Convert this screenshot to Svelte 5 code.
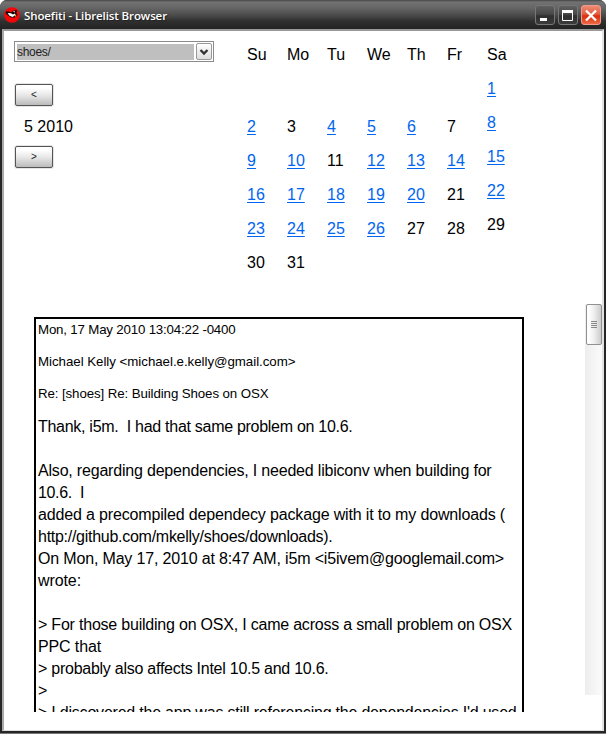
<script>
  const columns = [
    ['Su', '', '2', '9', '16', '23', '30'],
    ['Mo', '', '3', '10', '17', '24', '31'],
    ['Tu', '', '4', '11', '18', '25'],
    ['We', '', '5', '12', '19', '26'],
    ['Th', '', '6', '13', '20', '27'],
    ['Fr', '', '7', '14', '21', '28'],
    ['Sa', '1', '8', '15', '22', '29']
  ];
  const unlinked = ['3', '7', '11', '21', '27', '28', '29', '30', '31'];
  const isLink = (d) => /^\d+$/.test(d) && !unlinked.includes(d);

  const headers = [
    ['Mon, 17 May 2010 13:04:22 -0400', 197.5],
    ['Michael Kelly <michael.e.kelly@gmail.com>', 257.5],
    ['Re: [shoes] Re: Building Shoes on OSX', 230.5]
  ];
  const lines = [
    ['Thank, i5m.  I had that same problem on 10.6.', 314.5],
    ['', 0],
    ['Also, regarding dependencies, I needed libiconv when building for', 453.5],
    ['10.6.  I', 46],
    ['added a precompiled dependecy package with it to my downloads (', 467],
    ['http://github.com/mkelly/shoes/downloads).', 294.5],
    ['On Mon, May 17, 2010 at 8:47 AM, i5m <i5ivem@googlemail.com>', 466],
    ['wrote:', 43],
    ['', 0],
    ['> For those building on OSX, I came across a small problem on OSX', 474],
    ['PPC that', 63],
    ['> probably also affects Intel 10.5 and 10.6.', 290.5],
    ['>', 9],
    ["> I discovered the app was still referencing the dependencies I'd used", 478.5]
  ];

  // Spreads a line's characters so that it fills the given width.
  function fit(node, width) {
    const n = node.textContent.length;
    if (n < 2) return;
    const natural = node.getBoundingClientRect().width;
    node.style.letterSpacing = (width - natural) / n + 'px';
  }
</script>

<div class="window">
  <header>
    <svg class="logo" width="16" height="16" viewBox="0 0 16 16">
      <circle cx="8" cy="8" r="7.8" fill="#f40606" />
      <path d="M1.5 4.5 L5 4.5 L7 5.5 L10 3.5 L13 3 L12.5 6 L13.5 8 L11 10.5 L7 10.5 L4 8.5 L2 6.5 Z" fill="#150000" />
      <path d="M3.5 6 L7 6.2 L9 7.5 L11 6.5 L11.5 8 L8.5 10 L5.5 8.8 Z" fill="#fff" />
      <path d="M9 4.6 L11 4 L10.5 5.4 Z" fill="#fff" />
      <path d="M10 8.5 L12.5 7.5 L11.5 10 Z" fill="#e59a30" />
    </svg>
    <h1><span use:fit={143}>Shoefiti - Librelist Browser</span></h1>
    <div class="controls">
      <button aria-label="Minimize"><svg width="20" height="20"><rect x="5" y="13" width="7" height="3" fill="#fff" /></svg></button>
      <button aria-label="Maximize"><svg width="20" height="20"><path d="M4.5 6.5 V15.5 H14.5 V6" fill="none" stroke="#fff" /><rect x="4" y="5" width="11" height="3" fill="#fff" /></svg></button>
      <button class="close" aria-label="Close"><svg width="20" height="20"><path d="M5 5.5 L15 15.5 M15 5.5 L5 15.5" stroke="#fff" stroke-width="2.3" /></svg></button>
    </div>
  </header>
  <main>
    <section class="top">
      <div class="side">
        <div class="select">
          <div class="value"><span use:fit={33.5}>shoes/</span></div>
          <div class="drop"><svg width="16" height="18"><path d="M4.5 7 L8 10.5 L11.5 7" fill="none" stroke="#333" stroke-width="2.4" /></svg></div>
        </div>
        <button class="step">&lt;</button>
        <div class="month"><span use:fit={49}>5 2010</span></div>
        <button class="step">&gt;</button>
      </div>
      <div class="calendar">
        {#each columns as col, i}
          <div class="col" class:last={i === 6}>
            {#each col as d}
              <div class="cell">{#if isLink(d)}<a href="#day">{d}</a>{:else}{d}{/if}</div>
            {/each}
          </div>
        {/each}
      </div>
    </section>
    <section class="bottom">
      <article>
        {#each headers as [t, w]}
          <div class="meta"><span use:fit={w}>{t}</span></div>
        {/each}
        <div class="body">
          {#each lines as [t, w]}
            <div class="line"><span use:fit={w}>{t}</span></div>
          {/each}
        </div>
      </article>
      <div class="track"><div class="thumb"><i></i><i></i><i></i><i></i></div></div>
    </section>
  </main>
</div>

<style>
  .window {
    box-sizing: border-box;
    width: 606px;
    height: 734px;
    display: flex;
    flex-direction: column;
    padding: 0 2px 2px;
    background: #262626;
    border-bottom: 1px solid #777;
    border-radius: 7px 7px 0 0;
    font-family: "Liberation Sans", Arial, sans-serif;
    color: #000;
    overflow: hidden;
  }
  header {
    height: 29px;
    flex: none;
    box-sizing: border-box;
    margin: 0 -2px;
    padding: 0 5px 0 4px;
    display: flex;
    align-items: center;
    background: linear-gradient(#444 0, #727272 2px, #656565 8px, #4b4b4b 15px, #303030 21px, #242424 28px);
  }
  .logo { flex: none; }
  h1 {
    flex: 1;
    margin: 2px 0 0 4px;
    font: 600 11.5px/16px "Open Sans", "Noto Sans", sans-serif;
    color: #fff;
    white-space: nowrap;
    text-shadow: 1px 1px 1px #222;
  }
  .controls { display: flex; gap: 3px; margin-top: 1px; }
  .controls button {
    box-sizing: border-box;
    width: 20px;
    height: 20px;
    padding: 0;
    border: 1px solid #777;
    border-radius: 3px;
    background: linear-gradient(#606060, #484848 45%, #303030 55%, #3b3b3b);
  }
  .controls svg { display: block; margin: -1px; }
  .controls .close {
    border-color: #f19a88;
    background: linear-gradient(#ec8a76, #e25d40 45%, #d92e0c 55%, #ee6846);
  }
  main {
    flex: 1;
    min-height: 0;
    box-sizing: border-box;
    display: flex;
    flex-direction: column;
    border-top: 2px solid #999;
    border-left: 2px solid #aaa;
    border-right: 2px solid #e2e2e2;
    border-bottom: 1px solid #dcdfdf;
    background: #fff;
  }
  .top { height: 273px; flex: none; display: flex; }
  .side {
    width: 243px;
    padding: 10px 0 0 10px;
    box-sizing: border-box;
    display: flex;
    flex-direction: column;
    align-items: flex-start;
  }
  .select {
    width: 200px;
    height: 21px;
    box-sizing: border-box;
    display: flex;
    padding: 1px 1px 1px 2px;
    border: 1px solid #8b8b8b;
  }
  .value {
    flex: 1;
    margin: 1px 2px 1px 0;
    background: #bfbfbf;
    font-size: 12px;
    line-height: 17px;
    height: 16px;
    color: #222;
  }
  .drop {
    width: 16px;
    box-sizing: border-box;
    border: 1px solid #999;
    border-radius: 2px;
    background: linear-gradient(#fff, #ddd);
  }
  .drop svg { display: block; margin: -1px; }
  .step {
    width: 38px;
    height: 22px;
    margin: 22px 0 0 1px;
    padding: 0;
    box-sizing: border-box;
    border: 1px solid #555;
    border-radius: 2px;
    box-shadow: 0 0 0 1px #e5e5e5;
    background: linear-gradient(#fff 15%, #e8e8e8 50%, #bbb);
    font: 10px/18px "Liberation Sans", sans-serif;
    color: #222;
  }
  .month { margin: 10px 0 0 10px; height: 22px; font-size: 16px; line-height: 22px; white-space: pre; }
  .month + .step { margin-top: 8px; }
  .calendar { display: flex; padding-top: 13px; }
  .col { width: 40px; font-size: 16px; line-height: 22px; }
  .cell { height: 22px; margin-bottom: 12px; }
  .col:not(.last) .cell:nth-child(2) { margin-bottom: 16px; }
  a { color: #0066ee; text-underline-offset: 2px; text-decoration-thickness: 1px; }
  .bottom { flex: 1; min-height: 0; display: flex; }
  article {
    width: 490px;
    height: 395px;
    margin: 13px 0 0 30px;
    box-sizing: border-box;
    border: 2px solid #000;
    border-bottom: 0;
    padding: 1px 2px 0;
    overflow: hidden;
  }
  .meta, .line { white-space: pre; }
  .meta { height: 32px; font-size: 13.3px; line-height: 19px; }
  .line { height: 22px; font-size: 16px; line-height: 22px; }
  .track {
    width: 17px;
    height: 391px;
    margin-left: 61px;
    background: linear-gradient(90deg, #ededed, #fbfbfb);
  }
  .thumb {
    box-sizing: border-box;
    width: 16px;
    height: 41px;
    margin-left: 1px;
    border: 1px solid #909090;
    border-radius: 2px;
    display: flex;
    flex-direction: column;
    align-items: center;
    justify-content: center;
    gap: 1px;
    background: linear-gradient(90deg, #fff 10%, #eee 50%, #ccc);
  }
  .thumb i { width: 6px; height: 1px; background: #888; }
</style>
